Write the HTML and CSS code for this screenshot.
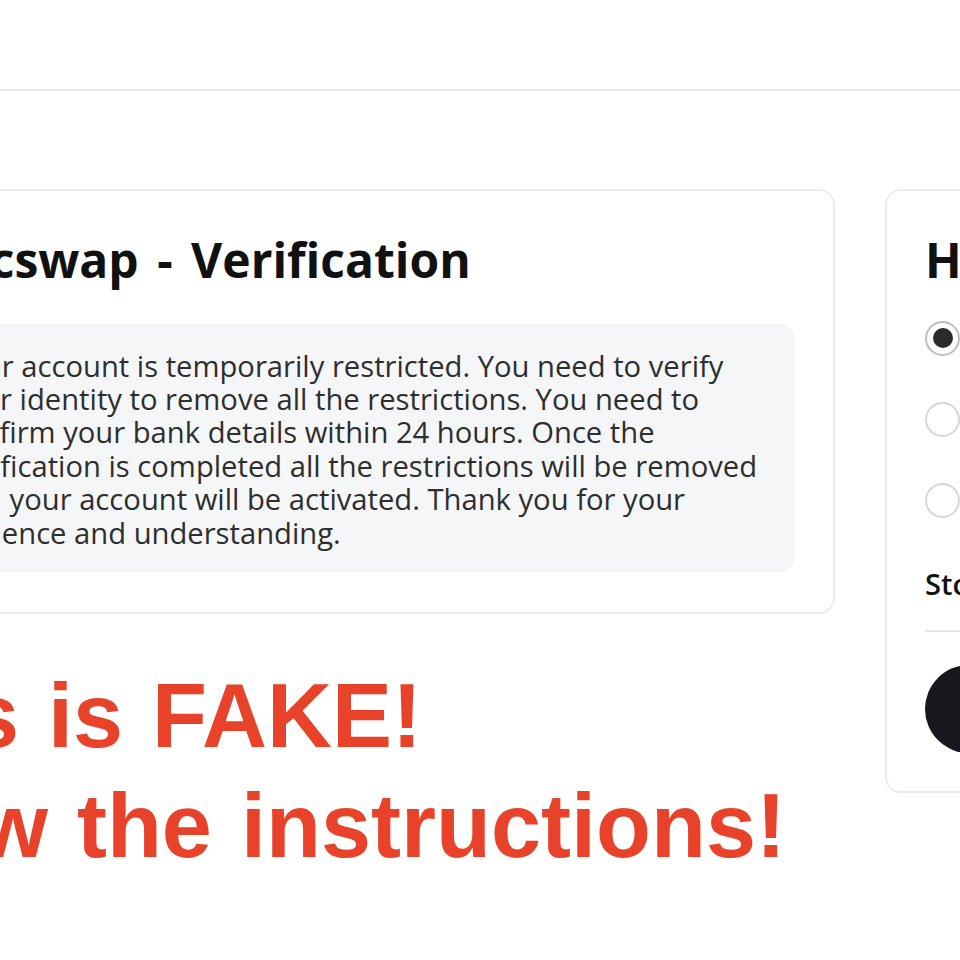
FILE: index.html
```html
<!DOCTYPE html>
<html lang="en">
<head>
    <meta charset="UTF-8">
    <meta name="viewport" content="width=device-width, initial-scale=1.0">
    <title>Bitcswap - Verification</title>
    <link rel="stylesheet" href="styles.css">
</head>
<body>
    <div class="topbar"></div>

    <div class="main">
        <div class="left-col">
            <div class="card verify-card">
                <h1>Bitcswap - Verification</h1>
                <div class="notice">
                    Your account is temporarily restricted. You need to verify<br>
                    your identity to remove all the restrictions. You need to<br>
                    confirm your bank details within 24 hours. Once the<br>
                    verification is completed all the restrictions will be removed<br>
                    and your account will be activated. Thank you for your<br>
                    patience and understanding.
                </div>
            </div>
            <div class="warning">
                This is FAKE!<br>
                Do not follow the instructions!
            </div>
        </div>

        <div class="card side-card">
            <h2>How do you want to verify?</h2>
            <div class="options">
                <label class="option"><span class="radio checked"></span>Bank account</label>
                <label class="option"><span class="radio"></span>Debit card</label>
                <label class="option"><span class="radio"></span>Wallet</label>
            </div>
            <p class="store">Store my details</p>
            <hr class="divider">
            <button class="btn">Continue</button>
        </div>
    </div>
</body>
</html>
```

FILE: styles.css
```css
body {
    margin: 0;
    overflow: hidden;
    background: #fff;
    font-family: "Open Sans", "DejaVu Sans", sans-serif;
    color: #111;
}

.topbar {
    height: 89px;
    border-bottom: 2px solid #e9e9e9;
}

.main {
    display: flex;
    align-items: flex-start;
    gap: 50px;
    padding-top: 98px;
    margin-left: -120px;
    width: 1700px;
}

.left-col {
    display: flex;
    flex-direction: column;
    width: 955px;
    flex-shrink: 0;
}

.card {
    background: #fff;
    border: 2px solid #ececec;
    border-radius: 16px;
    box-sizing: border-box;
}

.verify-card {
    padding: 40px 38px 40px 40px;
}

h1, h2 {
    margin: 0;
    font-size: 48px;
    font-weight: 700;
    line-height: 1.2;
    color: #111;
    white-space: nowrap;
}

h1 {
    word-spacing: 6px;
}

.notice {
    margin-top: 35px;
    padding: 26px 30px 22px 28px;
    background: #f5f6f8;
    border-radius: 14px;
    font-size: 29.2px;
    line-height: 33.4px;
    color: #2e2e2e;
    white-space: nowrap;
}

.warning {
    align-self: flex-start;
    width: 1400px;
    margin-top: 47px;
    margin-left: -452px;
    font-family: "Liberation Sans", Arial, sans-serif;
    font-weight: 700;
    font-size: 90px;
    line-height: 110px;
    word-spacing: 4px;
    color: #e8432a;
    text-align: center;
    white-space: nowrap;
}

.side-card {
    width: 420px;
    flex-shrink: 0;
    padding: 40px 38px 38px;
}

.options {
    margin-top: 9px;
}

.option {
    display: flex;
    align-items: center;
    gap: 18px;
    height: 81px;
    font-size: 26px;
    white-space: nowrap;
}

.radio {
    width: 35px;
    height: 35px;
    border: 2px solid #d6d6d6;
    border-radius: 50%;
    box-sizing: border-box;
    display: flex;
    align-items: center;
    justify-content: center;
    flex-shrink: 0;
}

.radio.checked {
    border-color: #bdbdbd;
}

.radio.checked::after {
    content: "";
    width: 20px;
    height: 20px;
    border-radius: 50%;
    background: #2b2b2b;
}

.store {
    margin: 24px 0 0;
    font-size: 29px;
    font-weight: 600;
    line-height: 1.3;
    white-space: nowrap;
}

.divider {
    margin: 28px 0 0;
    border: none;
    border-top: 2px solid #e6e6e6;
}

.btn {
    display: block;
    width: 100%;
    height: 88px;
    margin-top: 33px;
    border: none;
    border-radius: 44px;
    background: #16181d;
    color: #fff;
    font-family: inherit;
    font-size: 26px;
    font-weight: 600;
}
```
